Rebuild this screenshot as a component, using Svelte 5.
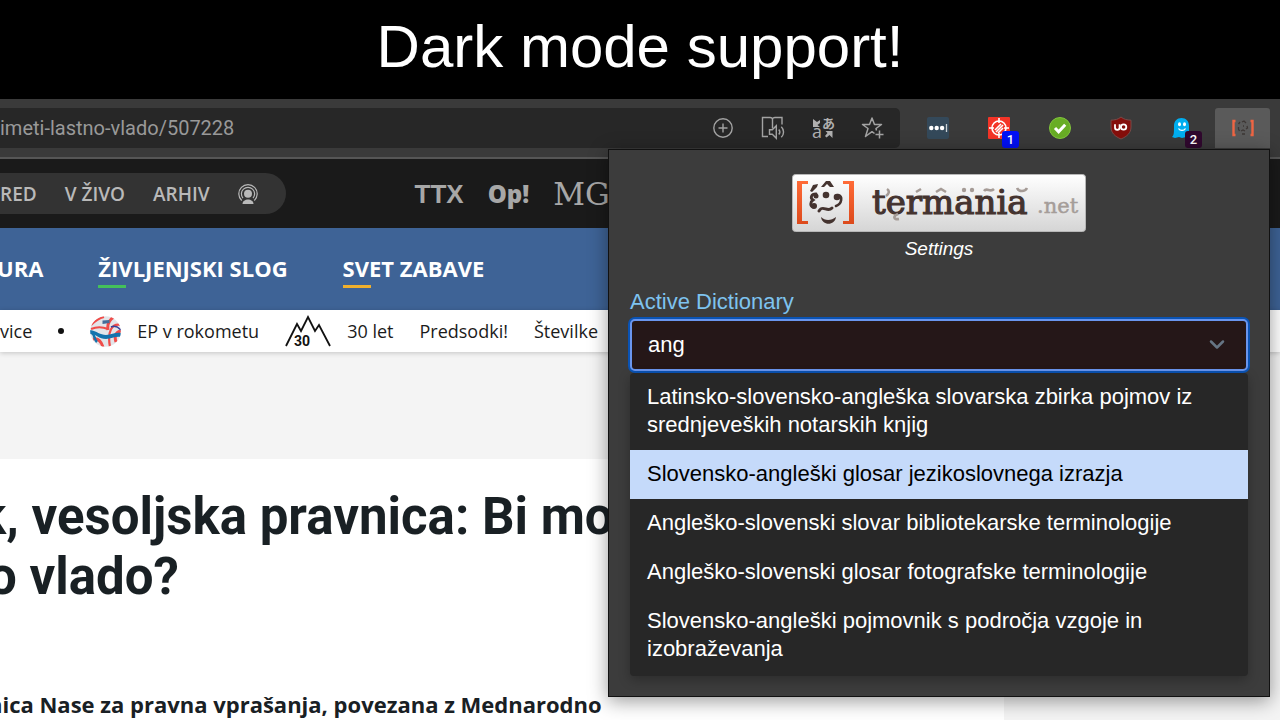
<script>
  let query = $state('ang');
  let active = $state(1);
  const options = [
    'Latinsko-slovensko-angleška slovarska zbirka pojmov iz srednjeveških notarskih knjig',
    'Slovensko-angleški glosar jezikoslovnega izrazja',
    'Angleško-slovenski slovar bibliotekarske terminologije',
    'Angleško-slovenski glosar fotografske terminologije',
    'Slovensko-angleški pojmovnik s področja vzgoje in izobraževanja'
  ];
</script>

<div class="page">
  <header class="banner"><h1>Dark mode support!</h1></header>

  <div class="browser">
    <div class="toolbar">
      <div class="address">
        <input class="url" aria-label="Address" value="imeti-lastno-vlado/507228" />
        <div class="tools">
          <button aria-label="Zoom in">
            <svg width="22" height="22" viewBox="0 0 22 22" fill="none" stroke="#a3a3a3" stroke-width="1.4"><circle cx="11" cy="11" r="9.2" /><path d="M11 6.5v9M6.5 11h9" /></svg>
          </button>
          <button aria-label="Read aloud">
            <svg width="24" height="24" viewBox="0 0 24 24" fill="none" stroke="#a3a3a3" stroke-width="1.4"><path d="M7 20.500H1.500V1.500H9c1.500 0 2.500.6 2.500 2v9M11.500 3.500c0-1.400 1-2 2.500-2h7v7" /><path d="M8.500 13.700h2.800l4-4v12.600l-4-4H8.500zM17.800 13.500c1.300 1.500 1.300 3.500 0 5M20.300 10.700c3 3 3 7.600 0 10.600" /></svg>
          </button>
          <button aria-label="Translate">
            <svg width="24" height="24" viewBox="0 0 24 24"><path d="M2 3v8h7l-2.500-2 2.500-2V4L6 6zM21.500 22v-7h-7l2 2-2.500 3 1.500 1.500 3-2.500z" fill="#b0b0b0" /><text x="11" y="12" class="glyph-jp">あ</text><text x="1" y="22" class="glyph-a">a</text></svg>
          </button>
          <button aria-label="Add to favourites">
            <svg width="24" height="24" viewBox="0 0 24 24" fill="none" stroke="#a3a3a3" stroke-width="1.5" stroke-linejoin="round"><path d="M13.500 17.500 11 15.700 4.500 20.500l2.500-8L1.500 8.500h7L11 2l2.500 6.500h7L15 12.500l.5 2M18.500 14.500v8M14.500 18.500h8" /></svg>
          </button>
        </div>
      </div>
      <div class="extensions">
        <button aria-label="Password manager">
          <svg width="22" height="22" viewBox="0 0 22 22"><rect width="22" height="22" rx="2" fill="#34495a" /><g fill="#fff"><circle cx="4.300" cy="11" r="2.200" /><circle cx="9.700" cy="11" r="2.200" /><circle cx="15.100" cy="11" r="2.200" /></g><path d="M19.500 7v8" stroke="#c9d0d5" stroke-width="1.300" /></svg>
        </button>
        <button aria-label="Request blocker">
          <svg width="22" height="22" viewBox="0 0 22 22" fill="none" stroke="#fff" stroke-width="1.600"><rect width="22" height="22" rx="1" fill="#f43427" stroke="none" /><circle cx="11" cy="11" r="7" /><path d="M11 1v5M11 16v5M1 11h5M16 11h5M7 13l6-6M8 15l7-7M10 16l5-5" /></svg>
          <span class="badge blue">1</span>
        </button>
        <button aria-label="Site safety">
          <svg width="22" height="22" viewBox="0 0 22 22"><circle cx="11" cy="11" r="10.500" fill="#68ad25" stroke="#82c63c" /><path d="m6 11 3.600 3.800L16.200 7.800" fill="none" stroke="#fff" stroke-width="3" /></svg>
        </button>
        <button aria-label="Ad blocker">
          <svg width="22" height="24" viewBox="0 0 22 24"><path d="M11 1c3 2.500 6 3 10 3.200V11c0 6-4 9.500-10 12C5 20.500 1 17 1 11V4.200C5 4 8 3.500 11 1z" fill="#850e0b" stroke="#794b49" /><path d="M5 8.300v3.300a2.300 2.300 0 0 0 4.600 0V8.300" fill="none" stroke="#fff" stroke-width="1.800" /><circle cx="13.600" cy="11" r="2.700" fill="none" stroke="#fff" stroke-width="1.800" /></svg>
        </button>
        <button aria-label="Tracker blocker">
          <svg width="22" height="22" viewBox="0 0 22 22"><path d="M3 9c0-5 3-8 7.500-8S18 4 18 9v9l1 3-4-1-4 1-3-1-4 1-3-1c2-2 2-4 2-11z" fill="#00aef0" /><g fill="#fff"><ellipse cx="8.500" cy="7.300" rx="1.500" ry="2" /><ellipse cx="13.500" cy="7.300" rx="1.500" ry="2" /></g><path d="M7.500 11.500c1.500 2.600 5.500 2.600 7 0" fill="none" stroke="#fff" stroke-width="1.300" /></svg>
          <span class="badge plum">2</span>
        </button>
        <button class="on" aria-label="Termania">
          <svg width="24" height="20" viewBox="0 0 24 20" fill="none"><path d="M4.500 3h-2v14h2M19.500 3h2v14h-2" stroke="#ee6543" stroke-width="2.400" /><path d="M7.500 6l1.500-2M11 4l2-1 2 2M7.500 9v2l1 2M12 8h1M16 8l.5 2-1.500 1M10 13l2-1 2 1M11 16h3" stroke="#3d3735" stroke-width="1.300" /></svg>
        </button>
      </div>
    </div>

    <div class="site">
      <div class="topbar">
        <nav class="pill">
          <a href="#spored">RED</a><a href="#vzivo">V ŽIVO</a><a href="#arhiv">ARHIV</a>
          <a href="#podkast" aria-label="Podkast">
            <svg width="20" height="20" viewBox="0 0 20 20" fill="none" stroke="#b9b9b9"><path d="M3.700 16.500a9.200 9.200 0 1 1 12.600 0" stroke-width="1.200" /><path d="M5 14.200a6.600 6.600 0 1 1 10 0" stroke-width="1.200" /><circle cx="10" cy="9.800" r="4" fill="#b9b9b9" stroke="none" /><path d="M4.500 20c0-6 11-6 11 0z" fill="#b9b9b9" stroke="none" /></svg>
          </a>
        </nav>
        <div class="brands">
          <a class="ttx" href="#ttx">TTX</a><a class="op" href="#op">Op!</a><a class="mg" href="#mg">MG</a>
        </div>
      </div>
      <nav class="sections">
        <a href="#kultura">URA</a>
        <a class="green" href="#slog">ŽIVLJENJSKI SLOG</a>
        <a class="amber" href="#zabava">SVET ZABAVE</a>
      </nav>
      <nav class="ticker">
        <a href="#novice">vice</a>
        <i class="dot"></i>
        <a class="pair" href="#rokomet">
          <svg width="31" height="31" viewBox="0 0 31 31"><defs><clipPath id="ball"><circle cx="15.500" cy="15.500" r="15.300" /></clipPath></defs><g clip-path="url(#ball)" fill="none"><path d="M0 0h31v31H0z" fill="#e3e5e9" /><path d="M1 9c5-5 9-7 13-8M1 13c7-3 12-2 17 0M31 9c-9-2-14 6-11 22" stroke="#f04c49" stroke-width="2.200" /><path d="M24 1c-5 3-7 7-6 13M3 23c5-1 8 2 10 8M31 15c-5 1-7 5-5 11" stroke="#f04c49" stroke-width="3" /><path d="M0 14c7 1 10 5 16 5 6 0 9-3 15-2v4c-6-1-9 2-15 2-7 0-10-5-16-5z" fill="#1473ad" /><path d="M2 17c3 2 2 6 5 9" stroke="#1473ad" stroke-width="2.500" /><path d="M21 11c4-2 7 0 10 3" stroke="#35419a" stroke-width="1.600" /><path d="M12.500 4.500l7-.5v3l-7 1z" fill="#446d99" /></g></svg>
          EP v rokometu</a>
        <a class="pair" href="#30let">
          <svg width="46" height="32" viewBox="0 0 46 32"><path d="M1 31 12 9l4 7 7-14 7 14 4-6 11 21" fill="none" stroke="#111" stroke-width="1.800" /><text x="9" y="31" class="peak">30</text></svg>
          30 let</a>
        <a href="#predsodki">Predsodki!</a>
        <a href="#stevilke">Številke</a>
      </nav>
      <main class="content">
        <article>
          <h2><span class="first">k, vesoljska pravnica: Bi mo</span><span class="second">o vlado?</span></h2>
          <p>nica Nase za pravna vprašanja, povezana z Mednarodno</p>
        </article>
      </main>
    </div>

    <section class="popup" aria-label="Termania">
      <svg class="logo" width="294" height="58" viewBox="0 0 294 58" role="img" aria-label="termania.net">
        <defs>
          <linearGradient id="plate" x2="0" y2="1"><stop stop-color="#fff" /><stop offset="1" stop-color="#d5d5d5" /></linearGradient>
          <linearGradient id="orange" x2="0" y2="1"><stop stop-color="#ff6b37" /><stop offset="1" stop-color="#dc4a1c" /></linearGradient>
        </defs>
        <rect x=".5" y=".5" width="293" height="57" rx="3" fill="url(#plate)" stroke="#b7b7b7" />
        <path d="M5 7h11v3h-6v37h6v3H5zM51 7h11v43H51v-3h6V10h-6z" fill="url(#orange)" />
        <g fill="#44332f">
          <path d="M18 17l3-6 5-1-1 3-5 5zM29 13l5-6h4l4 6h-4l-3-3-3 3z" />
          <circle cx="34" cy="21" r="3.300" />
          <circle cx="24" cy="22" r="2.500" /><circle cx="22" cy="32" r="3" />
          <circle cx="45" cy="23" r="3.300" />
        </g>
        <g fill="none" stroke="#44332f" stroke-linecap="round">
          <path d="M24 20c-5 0-6 4-3 6-3 2-3 6 0 7" stroke-width="2.800" />
          <path d="M46 21c5 1 4 9-2 11" stroke-width="2.600" />
          <path d="M27 37c4-7 8 2 13-3" stroke-width="3" />
        </g>
        <path d="M29 43c4 4 10 4 15 0-1 9-14 9-15 0z" fill="#44332f" />
        <text x="80" y="40" class="word">termania</text>
        <text x="245" y="39" class="net">.net</text>
        <g fill="none" stroke="#a59b96" stroke-width="2.600">
          <path d="M95 15c3 2 2 5-1 7M106 40c-5 2-5 6 1 5M124 18l5-3M144 18l5-3 5 3M192 17c3-4 6 2 10-2M225 14c2 4 8 4 10 0" />
        </g>
        <g fill="#a59b96"><circle cx="172" cy="16" r="2.200" /><circle cx="180" cy="16" r="2.200" /></g>
      </svg>
      <h3>Settings</h3>
      <label for="dictionary">Active Dictionary</label>
      <div class="combo">
        <input id="dictionary" role="combobox" aria-expanded="true" aria-controls="matches" autocomplete="off" bind:value={query} />
        <svg width="16" height="10" viewBox="0 0 16 10"><path d="m2 1.500 6 6 6-6" fill="none" stroke="#667584" stroke-width="2.500" stroke-linecap="round" stroke-linejoin="round" /></svg>
      </div>
      <div class="matches" id="matches" role="listbox" aria-label="Active Dictionary">
        {#each options as option, i}
          <button role="option" aria-selected={i === active} class:active={i === active} onclick={() => (active = i)}>{option}</button>
        {/each}
      </div>
    </section>
  </div>
</div>

<style>
  :global(body) { margin: 0; background: #000; }
  .page { display: flex; flex-direction: column; height: 100vh; overflow: hidden; font-family: 'Open Sans', 'Noto Sans', sans-serif; }
  h1, h2, h3, p { margin: 0; }
  a { color: inherit; text-decoration: none; white-space: nowrap; }
  button { padding: 0; border: 0; background: none; font: inherit; color: inherit; }
  svg { display: block; flex: none; overflow: visible; }

  .banner { flex: none; box-sizing: border-box; height: 99px; padding-top: 12px; background: #000; text-align: center; }
  .banner h1 { color: #fff; font: 400 60px/69px 'Liberation Sans', Arial, sans-serif; }

  .browser { position: relative; display: flex; flex: 1; flex-direction: column; min-height: 0; }
  .toolbar { display: flex; flex: none; gap: 10px; padding: 9px 10px 9px 0; background: #3a3a3a; border-bottom: 2px solid #565656; }
  .address { display: flex; flex: 1; align-items: center; height: 40px; padding-right: 2px; border-radius: 0 5px 5px 0; background: #272727; }
  .url { flex: 1; min-width: 0; padding: 0; border: 0; outline: 0; background: none; color: #999; font: 400 20px/26px Roboto, sans-serif; }
  .tools { display: flex; }
  .tools button { display: grid; place-items: center; width: 50px; height: 40px; }
  .glyph-jp { font: 700 13px 'Noto Sans CJK JP', sans-serif; fill: #b0b0b0; }
  .glyph-a { font: 400 18px 'Open Sans', sans-serif; fill: #b0b0b0; }
  .extensions { display: flex; gap: 6px; }
  .extensions button { position: relative; display: grid; place-items: center; width: 55px; height: 40px; border-radius: 3px 3px 0 0; }
  .extensions .on { background: #5a5a5a; }
  .badge { position: absolute; right: 7px; bottom: 0; width: 17px; border-radius: 3px; color: #fff; font: 500 13px/17px Roboto, sans-serif; text-align: center; }
  .blue { background: #0010f5; }
  .plum { background: #30082e; }

  .site { display: flex; flex: 1; flex-direction: column; min-height: 0; overflow: hidden; background: #f4f4f4; }
  .topbar { display: flex; flex: none; align-items: center; gap: 129px; height: 69px; background: #1a1a1a; }
  .pill { display: flex; align-items: center; gap: 28px; height: 41px; padding-right: 28px; border-radius: 0 21px 21px 0; background: #333; color: #b9b9b9; font-size: 19px; font-weight: 600; }
  .brands { display: flex; align-items: center; gap: 24px; color: #a7a7a7; line-height: 40px; }
  .ttx { font-family: 'Liberation Sans', sans-serif; font-size: 26px; font-weight: 700; }
  .op { font-size: 24px; font-weight: 800; }
  .mg { font-family: 'DejaVu Serif', serif; font-size: 31px; }
  .sections { display: flex; flex: none; align-items: center; gap: 55px; height: 82px; margin-left: -3px; background: #3e6396; color: #fff; font-size: 22px; font-weight: 700; line-height: 30px; }
  .sections a { padding: 2px 0 5px; background: linear-gradient(var(--mark, transparent), var(--mark, transparent)) left bottom / 28px 3px no-repeat; }
  .green { --mark: #44c15a; }
  .amber { --mark: #f0b02d; }
  .ticker { position: relative; display: flex; flex: none; align-items: center; gap: 26px; height: 42px; background: #fff; box-shadow: 0 1px 5px #0003; color: #1b1b1b; font-size: 18px; }
  .dot { width: 6px; height: 6px; border-radius: 50%; background: #111; }
  .pair { display: flex; align-items: center; gap: 16px; }
  .peak { font: 700 14px Roboto, sans-serif; fill: #111; }
  .content { flex: 1; min-height: 0; padding-top: 107px; }
  article { box-sizing: border-box; width: 78.4%; height: 100%; padding-top: 28px; background: #fff; color: #192024; white-space: nowrap; }
  h2 { font: 700 51px/60px Roboto, sans-serif; }
  h2 span { display: block; }
  .first { margin-left: -21px; }
  .second { margin-left: -12px; }
  p { margin: 81px 0 0 -12px; font-size: 22px; font-weight: 700; line-height: 32px; }

  .popup { position: absolute; top: 50px; right: 10px; box-sizing: border-box; width: 662px; padding: 24px 21px 20px; border: 1px solid #111; background: #3c3c3c; box-shadow: 0 4px 18px #0006; color: #fff; font: 400 22px/28px 'Liberation Sans', Arial, sans-serif; }
  .logo { margin: 0 auto; }
  .word { font: 400 34px 'DejaVu Serif', serif; fill: #44332f; stroke: #44332f; stroke-width: 1.2; }
  .net { font: 400 21px 'DejaVu Serif', serif; fill: #a59d99; stroke: #a59d99; stroke-width: .5; }
  h3 { padding-top: 3px; font-size: 19px; font-style: italic; font-weight: 400; text-align: center; }
  label { display: block; padding: 25px 0 3px; color: #7ec3ef; }
  .combo { display: flex; align-items: center; box-sizing: border-box; height: 52px; padding: 0 21px 0 16px; border: 2px solid #6a95ee; border-radius: 5px; background: #251718; box-shadow: 0 0 0 2px #0a53b4; }
  .combo input { flex: 1; min-width: 0; padding: 0; border: 0; outline: 0; background: none; color: #fff; font: inherit; }
  .matches { overflow: hidden; margin-top: 2px; padding-bottom: 2px; border-radius: 4px; background: #272727; box-shadow: 0 4px 12px #0004; }
  .matches button { display: block; width: 100%; padding: 10px 17px 11px; text-align: left; }
  .matches .active { background: #c5dafa; color: #000; }
</style>
